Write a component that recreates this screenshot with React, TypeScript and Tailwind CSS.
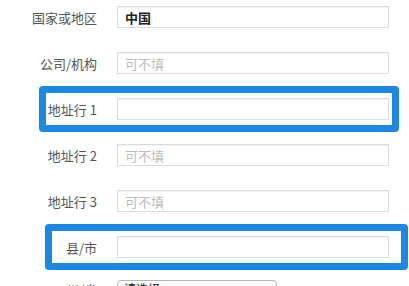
const rows = [
  { label: "国家或地区", value: "中国" },
  { label: "公司/机构", placeholder: "可不填" },
  { label: "地址行 1", highlight: "left-[39px] w-[360px]" },
  { label: "地址行 2", placeholder: "可不填" },
  { label: "地址行 3", placeholder: "可不填" },
  { label: "县/市", highlight: "left-[45px] w-[363px]" },
];

const App = () => {
  return (
    <div
      className="h-[286px] w-[409px] overflow-hidden bg-white"
      style={{ fontFamily: '"Noto Sans CJK SC", "Noto Sans", sans-serif' }}
    >
      <div className="flex flex-col gap-[24px] pt-[6px]">
        {rows.map((row) => (
          <div key={row.label} className="relative flex h-[22px] items-center">
            {row.highlight && (
              <div
                className={`pointer-events-none absolute -top-[12px] -bottom-[12px] rounded-[4px] border-[7px] border-[#1d87e4] ${row.highlight}`}
              />
            )}
            <div className="relative w-[97px] text-right text-[13px] leading-none text-[#555]">{row.label}</div>
            <div className="relative ml-[20px] flex h-[22px] w-[272px] items-center border border-[#dcdcdc] bg-white px-[7px] text-[13px] leading-none shadow-[inset_0_1px_1px_rgba(0,0,0,0.06)]">
              {row.value && <span className="font-bold text-[#222]">{row.value}</span>}
              {row.placeholder && <span className="text-[#bcbcbc]">{row.placeholder}</span>}
            </div>
          </div>
        ))}

        {/* 州/省 select, cut off at the bottom */}
        <div className="-mt-[4px] flex h-[22px] items-center">
          <div className="w-[97px] text-right text-[13px] leading-none text-[#555]">州/省</div>
          <div className="ml-[20px] flex h-[18px] w-[160px] items-center justify-between rounded-[4px] border border-[#b5b5b5] bg-gradient-to-b from-white to-[#f0f0f0] px-[6px] text-[12px] leading-none text-[#222]">
            <span>请选择</span>
            <span className="text-[9px] leading-none text-[#444]">⬍</span>
          </div>
        </div>
      </div>
    </div>
  );
};

export default App;
